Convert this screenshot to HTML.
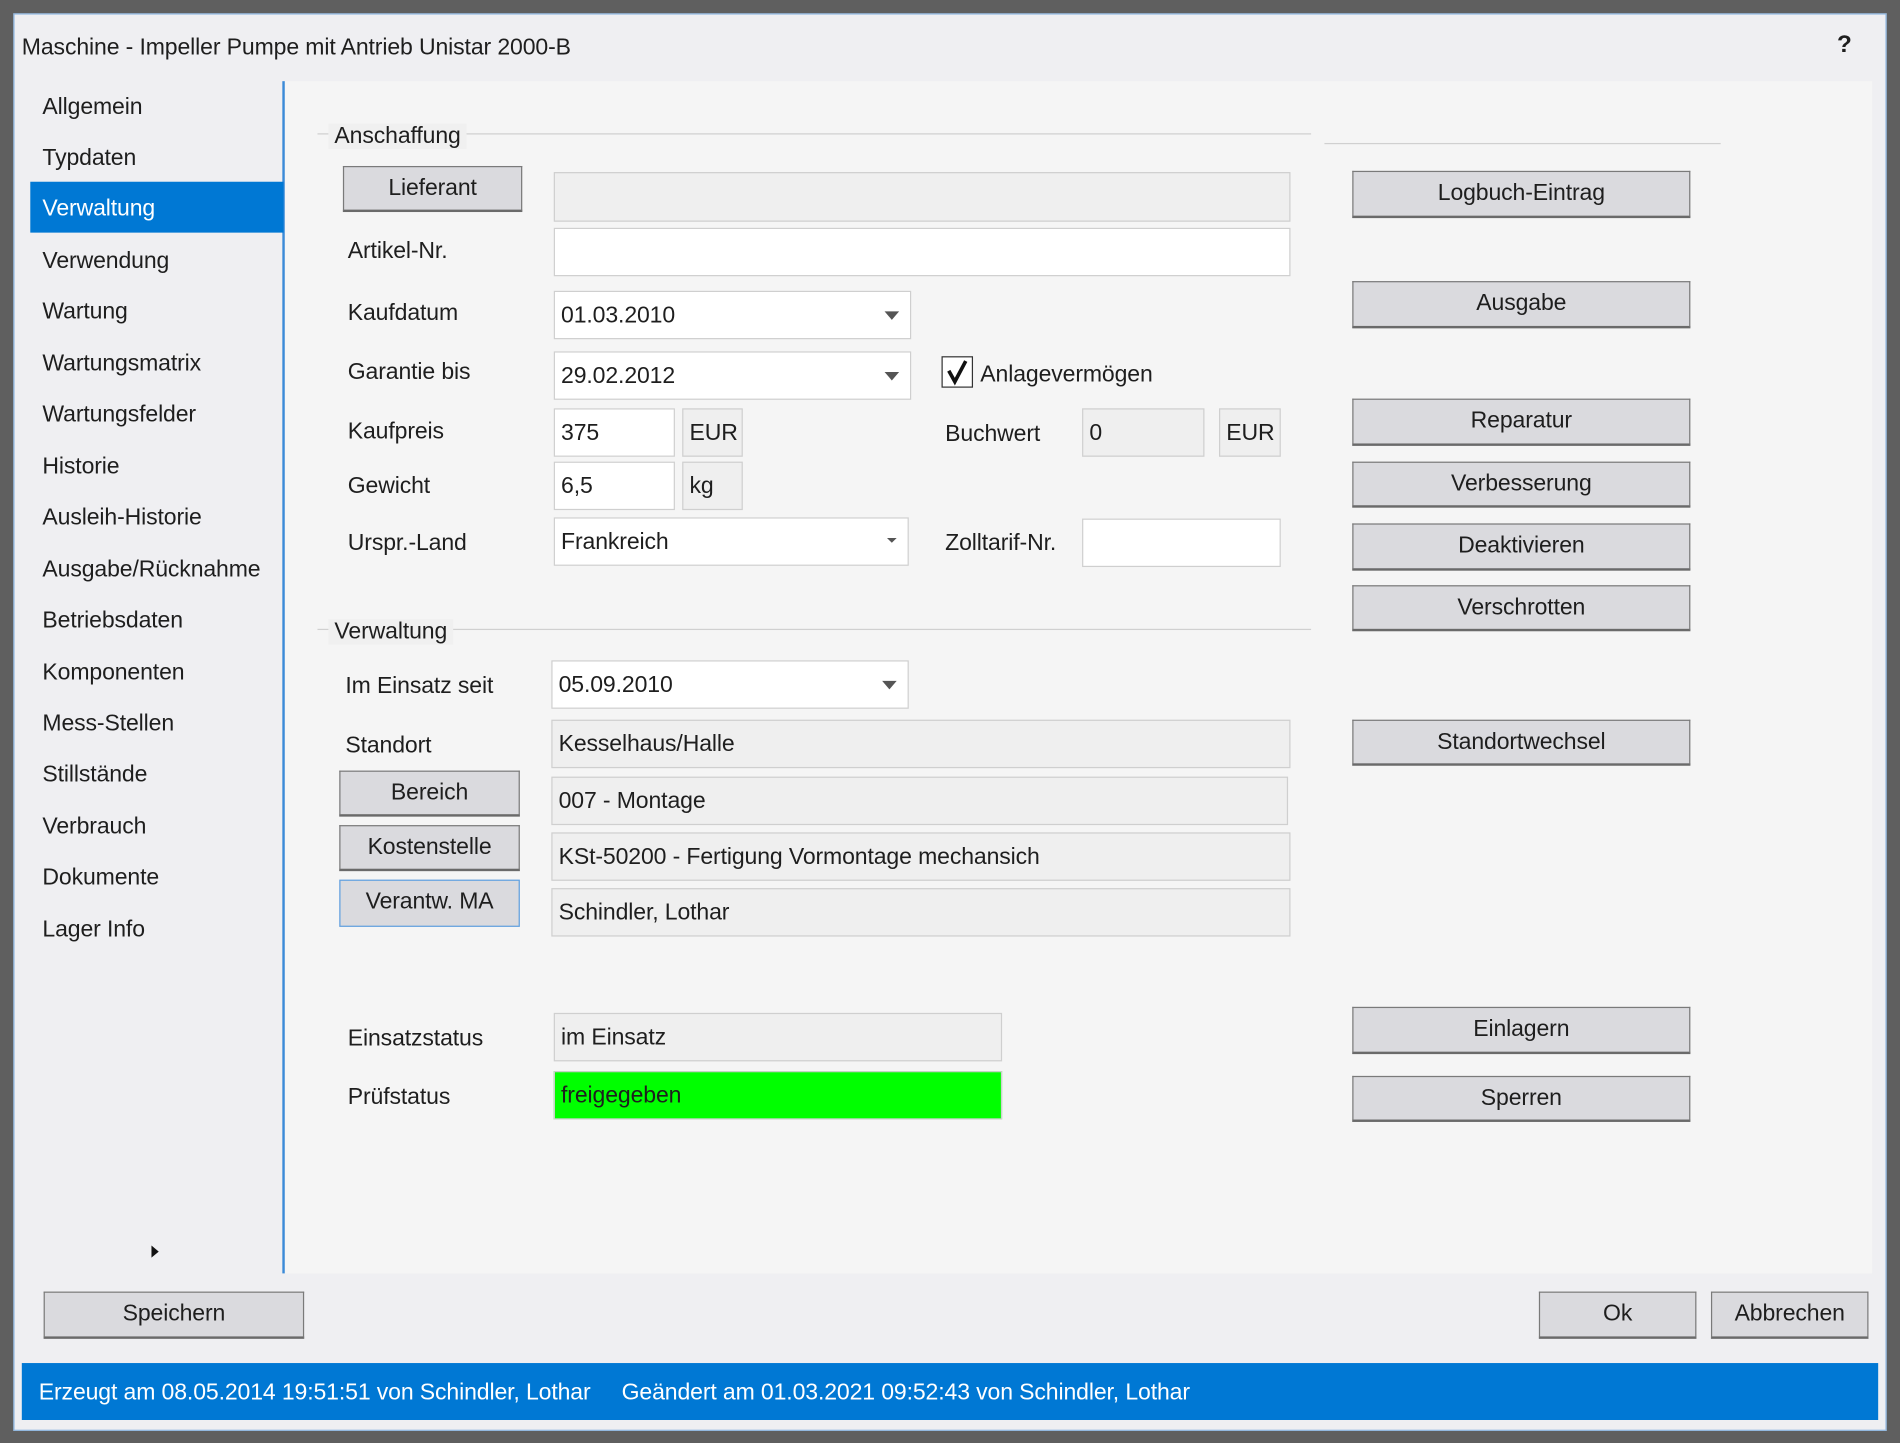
<!DOCTYPE html>
<html><head><meta charset="utf-8"><style>
html,body{margin:0;padding:0;width:1900px;height:1443px;overflow:hidden;background:#5f5f5f;}
#s{position:absolute;left:0;top:0;width:1568px;height:1191px;transform:scale(1.21173,1.2116);transform-origin:0 0;font-family:"Liberation Sans",sans-serif;font-size:19px;color:#1e1e1e;letter-spacing:-0.1px;}
#s div{position:absolute;box-sizing:border-box;}
.t{white-space:nowrap;line-height:21px;}
.dlg{left:11px;top:11px;width:1546px;height:1170px;background:#efeff2;border:1px solid #8ab4e0;}
.b{background:#dadade;border:1.5px solid #7a7a7a;border-bottom:2px solid #6a6a6a;text-align:center;line-height:36px;}
.f{border:1.5px solid #cfcfcf;background:#efefef;padding-left:5px;line-height:40px;}
.w{background:#fff;}
.arr{width:0;height:0;border-left:6px solid transparent;border-right:6px solid transparent;border-top:7px solid #555;}
.sb{left:35px;}
</style></head><body><div id="s">
<div class="dlg"></div>
<div class="t" style="left:18px;top:29px">Maschine - Impeller Pumpe mit Antrieb Unistar 2000-B</div>
<div class="t" style="left:1516px;top:27px;font-size:20px;font-weight:bold">?</div>
<div style="left:235px;top:67px;width:1310px;height:984px;background:#f5f5f5"></div>
<div style="left:233px;top:67px;width:2px;height:984px;background:#3b8ad8"></div>
<div style="left:25px;top:150px;width:209px;height:42px;background:#0078d4"></div>
<div class="t sb" style="top:78px">Allgemein</div>
<div class="t sb" style="top:120px">Typdaten</div>
<div class="t sb" style="top:162px;color:#fff">Verwaltung</div>
<div class="t sb" style="top:205px">Verwendung</div>
<div class="t sb" style="top:247px">Wartung</div>
<div class="t sb" style="top:290px">Wartungsmatrix</div>
<div class="t sb" style="top:332px">Wartungsfelder</div>
<div class="t sb" style="top:375px">Historie</div>
<div class="t sb" style="top:417px">Ausleih-Historie</div>
<div class="t sb" style="top:460px">Ausgabe/Rücknahme</div>
<div class="t sb" style="top:502px">Betriebsdaten</div>
<div class="t sb" style="top:545px">Komponenten</div>
<div class="t sb" style="top:587px">Mess-Stellen</div>
<div class="t sb" style="top:629px">Stillstände</div>
<div class="t sb" style="top:672px">Verbrauch</div>
<div class="t sb" style="top:714px">Dokumente</div>
<div class="t sb" style="top:757px">Lager Info</div>
<div style="left:125px;top:1028px;width:0;height:0;border-top:5px solid transparent;border-bottom:5px solid transparent;border-left:6px solid #111"></div>
<div style="left:262px;top:110px;width:820px;height:1px;background:#d0d0d0"></div>
<div style="left:1093px;top:118px;width:327px;height:1px;background:#d0d0d0"></div>
<div class="t" style="left:271px;top:102px;background:#f0f0f0;padding:0 5px">Anschaffung</div>
<div style="left:262px;top:519px;width:820px;height:1px;background:#d0d0d0"></div>
<div class="t" style="left:271px;top:511px;background:#f0f0f0;padding:0 5px">Verwaltung</div>
<div class="b" style="left:283px;top:137px;width:148px;height:38px">Lieferant</div>
<div class="f" style="left:457px;top:142px;width:608px;height:41px"></div>
<div class="t" style="left:287px;top:197px">Artikel-Nr.</div>
<div class="f w" style="left:457px;top:188px;width:608px;height:40px"></div>
<div class="t" style="left:287px;top:248px">Kaufdatum</div>
<div class="f w" style="left:457px;top:240px;width:295px;height:40px">01.03.2010</div>
<div class="arr" style="left:730px;top:257px"></div>
<div class="t" style="left:287px;top:297px">Garantie bis</div>
<div class="f w" style="left:457px;top:290px;width:295px;height:40px">29.02.2012</div>
<div class="arr" style="left:730px;top:307px"></div>
<div style="left:777px;top:294px;width:26px;height:26px;border:1.5px solid #333;background:#fff"></div>
<svg style="position:absolute;left:777px;top:294px" width="26" height="26"><path d="M6 12 L11 21 L20 4" stroke="#111" stroke-width="3" fill="none"/></svg>
<div class="t" style="left:809px;top:299px">Anlagevermögen</div>
<div class="t" style="left:287px;top:346px">Kaufpreis</div>
<div class="f w" style="left:457px;top:337px;width:100px;height:40px">375</div>
<div class="f" style="left:563px;top:337px;width:50px;height:40px">EUR</div>
<div class="t" style="left:780px;top:348px">Buchwert</div>
<div class="f" style="left:893px;top:337px;width:101px;height:40px">0</div>
<div class="f" style="left:1006px;top:337px;width:51px;height:40px">EUR</div>
<div class="t" style="left:287px;top:391px">Gewicht</div>
<div class="f w" style="left:457px;top:381px;width:100px;height:40px">6,5</div>
<div class="f" style="left:563px;top:381px;width:50px;height:40px">kg</div>
<div class="t" style="left:287px;top:438px">Urspr.-Land</div>
<div class="f w" style="left:457px;top:427px;width:293px;height:40px">Frankreich</div>
<div class="arr" style="left:732px;top:444px;border-width:4px 4px 0 4px"></div>
<div class="t" style="left:780px;top:438px">Zolltarif-Nr.</div>
<div class="f w" style="left:893px;top:428px;width:164px;height:40px"></div>
<div class="t" style="left:285px;top:556px">Im Einsatz seit</div>
<div class="f w" style="left:455px;top:545px;width:295px;height:40px">05.09.2010</div>
<div class="arr" style="left:728px;top:562px"></div>
<div class="t" style="left:285px;top:605px">Standort</div>
<div class="f" style="left:455px;top:594px;width:610px;height:40px">Kesselhaus/Halle</div>
<div class="b" style="left:280px;top:636px;width:149px;height:38px">Bereich</div>
<div class="f" style="left:455px;top:641px;width:608px;height:40px">007 - Montage</div>
<div class="b" style="left:280px;top:681px;width:149px;height:38px">Kostenstelle</div>
<div class="f" style="left:455px;top:687px;width:610px;height:40px">KSt-50200 - Fertigung Vormontage mechansich</div>
<div class="b" style="left:280px;top:726px;width:149px;height:39px;border:1.5px solid #5fa0e0">Verantw. MA</div>
<div class="f" style="left:455px;top:733px;width:610px;height:40px">Schindler, Lothar</div>
<div class="t" style="left:287px;top:847px">Einsatzstatus</div>
<div class="f" style="left:457px;top:836px;width:370px;height:40px">im Einsatz</div>
<div class="t" style="left:287px;top:895px">Prüfstatus</div>
<div class="f" style="left:457px;top:884px;width:370px;height:40px;background:#00ff00">freigegeben</div>
<div class="b" style="left:1116px;top:141px;width:279px;height:39px">Logbuch-Eintrag</div>
<div class="b" style="left:1116px;top:232px;width:279px;height:39px">Ausgabe</div>
<div class="b" style="left:1116px;top:329px;width:279px;height:39px">Reparatur</div>
<div class="b" style="left:1116px;top:381px;width:279px;height:38px">Verbesserung</div>
<div class="b" style="left:1116px;top:432px;width:279px;height:39px">Deaktivieren</div>
<div class="b" style="left:1116px;top:483px;width:279px;height:38px">Verschrotten</div>
<div class="b" style="left:1116px;top:594px;width:279px;height:38px">Standortwechsel</div>
<div class="b" style="left:1116px;top:831px;width:279px;height:39px">Einlagern</div>
<div class="b" style="left:1116px;top:888px;width:279px;height:38px">Sperren</div>
<div class="b" style="left:36px;top:1066px;width:215px;height:39px">Speichern</div>
<div class="b" style="left:1270px;top:1066px;width:130px;height:39px">Ok</div>
<div class="b" style="left:1412px;top:1066px;width:130px;height:39px">Abbrechen</div>
<div style="left:18px;top:1125px;width:1532px;height:47px;background:#0078d4"></div>
<div class="t" style="left:32px;top:1139px;color:#fff">Erzeugt am 08.05.2014 19:51:51 von Schindler, Lothar</div>
<div class="t" style="left:513px;top:1139px;color:#fff">Geändert am 01.03.2021 09:52:43 von Schindler, Lothar</div>
</div></body></html>
